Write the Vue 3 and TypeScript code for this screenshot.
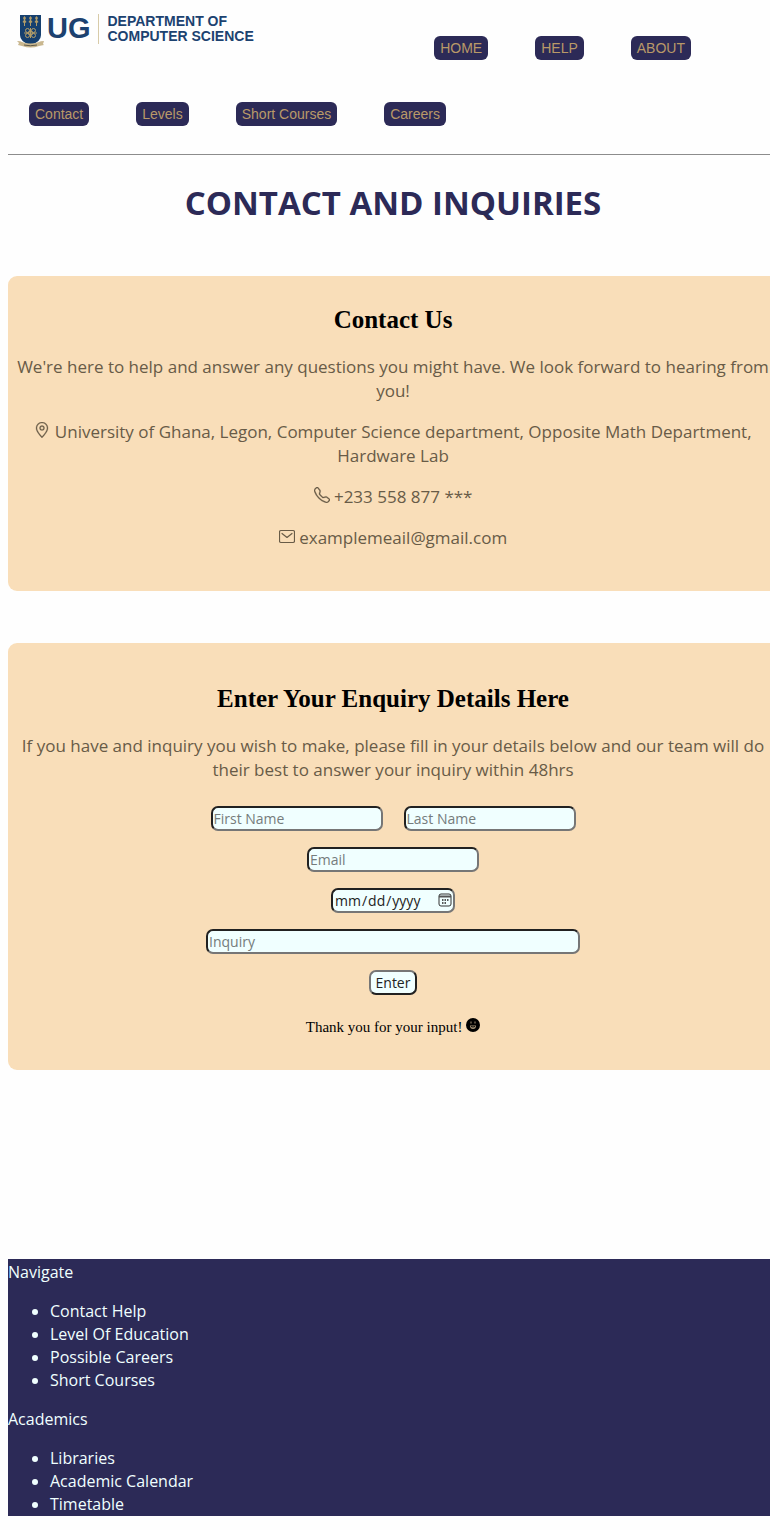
<script setup lang="ts">
import { ref } from 'vue'

interface FooterGroup {
  title: string
  items: string[]
}

const mainLinks: string[] = ['HOME', 'HELP', 'ABOUT']
const subLinks: string[] = ['Contact', 'Levels', 'Short Courses', 'Careers']
const footerGroups: FooterGroup[] = [
  { title: 'Navigate', items: ['Contact Help', 'Level Of Education', 'Possible Careers', 'Short Courses'] },
  { title: 'Academics', items: ['Libraries', 'Academic Calendar', 'Timetable'] },
]

const firstName = ref('')
const lastName = ref('')
const email = ref('')
const date = ref('')
const inquiry = ref('')
</script>

<template>
  <div class="viewport">
    <div class="page">
      <header>
        <div class="top">
          <a class="brand" href="#">
            <svg class="crest" viewBox="0 0 27 34" aria-hidden="true">
              <path d="M3 1h21v20q0 7-10.500 10Q3 28 3 21z" fill="#16406f" />
              <g fill="#b39d68">
                <path d="M7.500 2l1.500 2-1 2 1.500 2-1.500 1v3h-1V9L5.500 8 7 6 6 4zM13.500 2l1.500 2-1 2 1.500 2-1.500 1v3h-1V9l-1.500-1L13 6l-1-2zM19.500 2l1.500 2-1 2 1.500 2-1.500 1v3h-1V9l-1.500-1L19 6l-1-2z" />
                <path d="M0 27q4 0 5 1 8 3 17 0 1-1 5-1l-1 3 1 1-5 1q-8 3-17 0l-4-1 1-2z" fill="#c9b78f" />
              </g>
              <path d="M7 31q6 1.500 13 0" fill="none" stroke="#5f5948" stroke-width="1" />
              <g fill="none" stroke="#b39d68" stroke-width="1">
                <circle cx="13.500" cy="19" r="2" />
                <circle cx="10.500" cy="16.500" r="2" />
                <circle cx="16.500" cy="16.500" r="2" />
                <circle cx="10.500" cy="21.500" r="2" />
                <circle cx="16.500" cy="21.500" r="2" />
                <path d="M7 19h13M13.500 14v10" />
              </g>
            </svg>
            <span class="ug">UG</span>
            <span class="dept">DEPARTMENT OF<br />COMPUTER SCIENCE</span>
          </a>
          <nav class="main-nav" aria-label="Main">
            <a v-for="link in mainLinks" :key="link" class="pill" href="#">{{ link }}</a>
          </nav>
        </div>
        <nav class="sub-nav" aria-label="Sections">
          <a v-for="link in subLinks" :key="link" class="pill" href="#">{{ link }}</a>
        </nav>
      </header>

      <main>
        <h1>CONTACT AND INQUIRIES</h1>

        <section class="card">
          <h2>Contact Us</h2>
          <p>We're here to help and answer any questions you might have. We look forward to hearing from you!</p>
          <p>
            <svg class="icon" viewBox="0 0 16 16" fill="currentColor" stroke="currentColor" stroke-width="0.300" aria-hidden="true">
              <path d="M12.166 8.940c-.524 1.062-1.234 2.120-1.960 3.070A32 32 0 0 1 8 14.580a32 32 0 0 1-2.206-2.570c-.726-.950-1.436-2.008-1.960-3.070C3.304 7.867 3 6.862 3 6a5 5 0 0 1 10 0c0 .862-.305 1.867-.834 2.940M8 16s6-5.686 6-10A6 6 0 0 0 2 6c0 4.314 6 10 6 10" />
              <path d="M8 7.500a1.500 1.500 0 1 1 0-3 1.500 1.500 0 0 1 0 3m0 1a2.500 2.500 0 1 0 0-5 2.500 2.500 0 0 0 0 5" />
            </svg>
            University of Ghana, Legon, Computer Science department, Opposite Math Department, Hardware Lab
          </p>
          <p>
            <svg class="icon" viewBox="0 0 16 16" fill="currentColor" stroke="currentColor" stroke-width="0.300" aria-hidden="true">
              <path d="M3.654 1.328a.678.678 0 0 0-1.015-.063L1.605 2.300c-.483.484-.661 1.169-.450 1.770a17.600 17.600 0 0 0 4.168 6.608 17.600 17.600 0 0 0 6.608 4.168c.601.211 1.286.033 1.770-.450l1.034-1.034a.678.678 0 0 0-.063-1.015l-2.307-1.794a.680.680 0 0 0-.580-.122l-2.190.547a1.750 1.750 0 0 1-1.657-.459L5.482 8.062a1.750 1.750 0 0 1-.460-1.657l.548-2.190a.680.680 0 0 0-.122-.580zM1.884.511a1.745 1.745 0 0 1 2.612.163L6.290 2.980c.329.423.445.974.315 1.494l-.547 2.190a.680.680 0 0 0 .178.643l2.457 2.457a.680.680 0 0 0 .644.178l2.189-.547a1.750 1.750 0 0 1 1.494.315l2.306 1.794c.829.645.905 1.870.163 2.611l-1.034 1.034c-.740.740-1.846 1.065-2.877.702a18.600 18.600 0 0 1-7.010-4.420 18.600 18.600 0 0 1-4.420-7.009c-.362-1.030-.037-2.137.703-2.877z" />
            </svg>
            +233 558 877 ***
          </p>
          <p>
            <svg class="icon" viewBox="0 0 16 16" fill="none" stroke="currentColor" stroke-width="1.200" aria-hidden="true">
              <rect x="0.500" y="2.500" width="15" height="12" rx="1.500" />
              <path d="M3 5.500l5 4 5-4" stroke-linecap="round" stroke-linejoin="round" />
            </svg>
            examplemeail@gmail.com
          </p>
        </section>

        <section class="card enquiry">
          <h2>Enter Your Enquiry Details Here</h2>
          <p>If you have and inquiry you wish to make, please fill in your details below and our team will do their best to answer your inquiry within 48hrs</p>
          <form @submit.prevent>
            <div class="names">
              <input v-model="firstName" class="field" type="text" placeholder="First Name" aria-label="First Name" />
              <input v-model="lastName" class="field" type="text" placeholder="Last Name" aria-label="Last Name" />
            </div>
            <input v-model="email" class="field" type="email" placeholder="Email" aria-label="Email" />
            <div class="date-wrap">
              <input v-model="date" class="field date" type="date" aria-label="Date" />
              <svg class="calendar" viewBox="0 0 14 14" aria-hidden="true">
                <rect x="1" y="1" width="12" height="12" rx="2" fill="none" stroke="#333" stroke-width="1" />
                <path d="M1 3.500h12" stroke="#555" stroke-width="2" />
                <path d="M4 7h1.500M6.500 7H8M9 7h1.500M4 10h1.500M6.500 10H8" stroke="#222" stroke-width="1.500" />
              </svg>
            </div>
            <input v-model="inquiry" class="field wide" type="text" placeholder="Inquiry" aria-label="Inquiry" />
            <button class="field enter" type="submit">Enter</button>
          </form>
          <div class="thanks">
            Thank you for your input!
            <svg class="smile" viewBox="0 0 14 14" aria-hidden="true">
              <circle cx="7" cy="7" r="7" fill="#000" />
              <path d="M4 7.500h6q0 3.500-3 3.500T4 7.500z" fill="#a89578" />
              <path d="M5 3.500v2M9 3.500v2" stroke="#a89578" stroke-width="1" />
              <path d="M5 8.500q2 1 4 0" stroke="#000" fill="none" />
            </svg>
          </div>
        </section>
      </main>

      <footer>
        <template v-for="group in footerGroups" :key="group.title">
          <div>{{ group.title }}</div>
          <ul>
            <li v-for="item in group.items" :key="item"><a href="#">{{ item }}</a></li>
          </ul>
        </template>
      </footer>
    </div>
  </div>
</template>

<style>
body {
  margin: 0;
  background: #fefefe;
}
</style>

<style scoped>
.viewport {
  overflow: hidden;
  padding-bottom: 15px;
}
.page {
  margin: 0 -8px 0 8px;
  font-family: "Open Sans", "Noto Sans", sans-serif;
}
a {
  color: inherit;
  text-decoration: none;
}
header {
  border-bottom: 1px solid #8c8c8c;
  padding-bottom: 28px;
}
.top {
  display: flex;
  justify-content: space-between;
  align-items: flex-start;
  padding: 14px 87px 0 9px;
}
.brand {
  display: flex;
  align-items: flex-start;
  color: #1c4270;
  font-family: "Liberation Sans", Arial, sans-serif;
  font-weight: bold;
}
.crest {
  width: 27px;
  height: 34px;
}
.ug {
  margin-left: 3px;
  font-size: 29px;
  line-height: 28px;
}
.dept {
  margin-left: 7px;
  padding-left: 9px;
  border-left: 1px solid #d8cba8;
  font-size: 14px;
  line-height: 15px;
}
.main-nav,
.sub-nav {
  display: flex;
  gap: 47px;
}
.main-nav {
  margin-top: 22px;
}
.sub-nav {
  margin-top: 42px;
  padding-left: 21px;
}
.pill {
  padding: 0 6px;
  border-radius: 6px;
  background: #2c2a57;
  color: #b99968;
  font-family: "Liberation Sans", Arial, sans-serif;
  font-size: 14px;
  line-height: 24px;
  white-space: nowrap;
}
h1 {
  margin: 24px 0 49px;
  color: #2c2a57;
  text-align: center;
  font-size: 33px;
  line-height: 48px;
}
.card {
  padding: 29px 8px 41px;
  border-radius: 9px;
  background: #f9deb9;
  text-align: center;
}
h2 {
  margin: 0 0 20px;
  color: #000;
  font-family: "Liberation Serif", "Times New Roman", serif;
  font-size: 25px;
  line-height: 30px;
}
p {
  margin: 0 0 17px;
  color: #685b47;
  font-size: 17px;
  line-height: 24px;
}
.card p:last-child {
  margin-bottom: 0;
}
.icon {
  width: 16px;
  height: 16px;
  vertical-align: 0;
}
.enquiry {
  margin-top: 52px;
  padding: 41px 8px 33px;
}
form {
  display: flex;
  flex-direction: column;
  align-items: center;
  gap: 16px;
  margin-top: 24px;
}
.enquiry p {
  margin-bottom: 0;
}
.names {
  display: flex;
  gap: 21px;
}
.field {
  box-sizing: border-box;
  width: 172px;
  height: 25px;
  margin: 0;
  padding: 0 1px;
  border: 2px inset #767676;
  border-radius: 7px;
  background: #f0ffff;
  color: #222;
  font-family: inherit;
  font-size: 14px;
}
.field::placeholder {
  color: #757c7c;
}
.date-wrap {
  position: relative;
  display: flex;
}
.field.date {
  width: 124px;
}
.date::-webkit-calendar-picker-indicator {
  opacity: 0;
}
.calendar {
  position: absolute;
  top: 5px;
  right: 3px;
  width: 14px;
  height: 14px;
  pointer-events: none;
}
.field.wide {
  width: 374px;
}
.field.enter {
  width: auto;
  padding: 0 5px;
  border-style: outset;
}
.thanks {
  margin-top: 22px;
  color: #000;
  font-family: "Liberation Serif", "Times New Roman", serif;
  font-size: 15px;
  line-height: 20px;
}
.smile {
  width: 14px;
  height: 14px;
  vertical-align: 0;
}
footer {
  margin-top: 189px;
  padding-top: 2px;
  background: #2c2a57;
  color: #f0ffff;
  font-size: 16px;
  line-height: 23px;
}
ul {
  margin: 16px 0;
  padding-left: 42px;
}
ul:last-child {
  margin-bottom: 0;
}
</style>
